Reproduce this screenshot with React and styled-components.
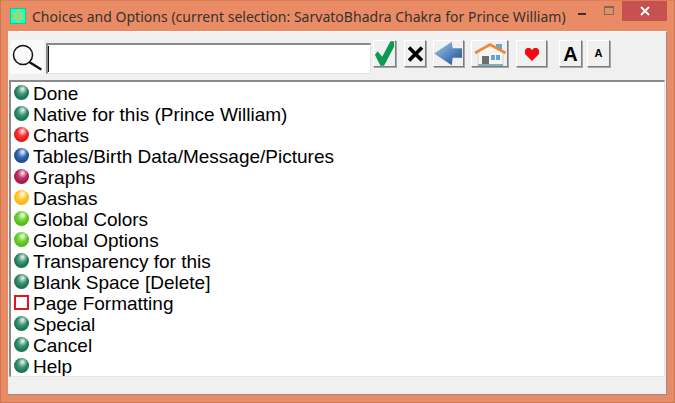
import React from 'react'
import styled, { createGlobalStyle } from 'styled-components'

const Global = createGlobalStyle`
  html, body { margin: 0; padding: 0; background: #e98c65; }
  #root { width: 675px; height: 403px; overflow: hidden; }
`

const Window = styled.div`
  width: 675px;
  height: 403px;
  box-sizing: border-box;
  display: flex;
  flex-direction: column;
  background: #e98c65;
  border: 1px solid #c97850;
  border-top-color: #d98058;
  padding: 0 7px 7px 7px;
  font-family: 'Liberation Sans', Arial, sans-serif;
`

const TitleBar = styled.div`
  height: 30px;
  flex: none;
  display: flex;
  align-items: center;
  position: relative;
`

const AppIcon = styled.svg`
  width: 16px;
  height: 16px;
  margin-left: 2px;
  flex: none;
`

const TitleText = styled.div`
  margin-left: 6px;
  margin-top: 1px;
  font-family: 'Noto Sans', 'Open Sans', sans-serif;
  font-size: 14px;
  letter-spacing: 0.02px;
  color: #38312c;
  white-space: nowrap;
`

const Controls = styled.div`
  position: absolute;
  top: 0;
  right: 0;
  display: flex;
  align-items: flex-start;
`

const ControlButton = styled.div`
  height: 20px;
  display: flex;
  align-items: center;
  justify-content: center;
  width: ${p => p.$width}px;
  background: ${p => p.$bg || 'transparent'};
`

const MinDash = styled.div`
  width: 8px;
  height: 2px;
  margin-top: 5px;
  background: #38312c;
`

const MaxBox = styled.div`
  width: 8px;
  height: 6px;
  border: 1px solid #7a6a5e;
  border-top-width: 2px;
  margin-bottom: 2px;
`

const Client = styled.div`
  flex: 1;
  min-height: 0;
  display: flex;
  flex-direction: column;
  background: #f0f0f0;
  border-top: 1px solid #fff;
  border-right: 1px solid #8f8f8f;
  border-bottom: 1px solid #8f8f8f;
`

const Toolbar = styled.div`
  height: 48px;
  flex: none;
  box-sizing: border-box;
  display: flex;
  align-items: flex-start;
  padding-top: 8px;
  padding-left: 2px;
  background: #f0f0f0;
`

const SearchGlyph = styled.div`
  width: 34px;
  height: 34px;
  flex: none;
  background: #fafafa;
  display: flex;
  align-items: center;
  justify-content: center;
`

const SearchInput = styled.div`
  width: 325px;
  height: 31px;
  margin: 3px 2px 0 2px;
  flex: none;
  box-sizing: border-box;
  background: #fff;
  border: 2px solid #8a8a8a;
  border-right: 1px solid #e2e2e2;
  border-bottom: 1px solid #e2e2e2;
  position: relative;
  &::after {
    content: '';
    position: absolute;
    left: 0;
    top: 1px;
    bottom: 1px;
    width: 1px;
    background: #111;
  }
`

const ToolButton = styled.div`
  width: ${p => p.$width}px;
  height: 27px;
  margin-left: ${p => p.$gap || 0}px;
  flex: none;
  box-sizing: border-box;
  background: #f0f0f0;
  border: 1px solid;
  border-color: #fff #7d7d7d #7d7d7d #fff;
  box-shadow: 1px 1px 0 #a8a8a8;
  display: flex;
  align-items: center;
  justify-content: center;
  position: relative;
`

const FontLetter = styled.span`
  font-family: 'Liberation Sans', Arial, sans-serif;
  font-weight: bold;
  color: #000;
  font-size: ${p => p.$size}px;
  line-height: 1;
`

const List = styled.div`
  height: 297px;
  flex: none;
  box-sizing: border-box;
  margin-left: 1px;
  margin-right: 1px;
  padding-top: 1px;
  background: #fff;
  border-top: 2px solid #8a8a8a;
  border-left: 2px solid #8a8a8a;
  border-right: 1px solid #e4e4e4;
  border-bottom: 1px solid #e4e4e4;
  overflow: hidden;
`

const Row = styled.div`
  height: 21px;
  display: flex;
  align-items: center;
  padding-left: 3px;
`

const Label = styled.span`
  margin-left: 4px;
  font-size: 19px;
  line-height: 21px;
  color: #000;
  white-space: nowrap;
`

const BallShape = styled.div`
  width: 15px;
  height: 15px;
  flex: none;
  border-radius: 50%;
  margin-top: -2px;
  background:
    radial-gradient(circle at 58% 26%, rgba(255, 255, 255, 0.95) 0, rgba(255, 255, 255, 0.45) 16%, rgba(255, 255, 255, 0) 36%),
    radial-gradient(circle at 50% 42%, ${p => p.$light} 0, ${p => p.$base} 58%, ${p => p.$dark} 100%);
`

const EmptyBox = styled.div`
  width: 15px;
  height: 15px;
  flex: none;
  box-sizing: border-box;
  margin-top: -2px;
  border: 2px solid #e8141c;
  background: #fff;
`

const StatusBar = styled.div`
  flex: 1;
  background: #f0f0f0;
`

const palette = {
  green: ['#5fb08c', '#1d7a58', '#145f44'],
  red: ['#ff5a5a', '#f01818', '#c01010'],
  blue: ['#5c8ccc', '#1c5098', '#143f7e'],
  plum: ['#d8527f', '#aa1a52', '#861442'],
  yellow: ['#ffdc60', '#fcbc14', '#eaa406'],
  lime: ['#98e458', '#54c018', '#42a40e'],
}

const items = [
  ['Done', 'green'],
  ['Native for this (Prince William)', 'green'],
  ['Charts', 'red'],
  ['Tables/Birth Data/Message/Pictures', 'blue'],
  ['Graphs', 'plum'],
  ['Dashas', 'yellow'],
  ['Global Colors', 'lime'],
  ['Global Options', 'lime'],
  ['Transparency for this', 'green'],
  ['Blank Space [Delete]', 'green'],
  ['Page Formatting', null],
  ['Special', 'green'],
  ['Cancel', 'green'],
  ['Help', 'green'],
]

const Ball = ({ color }) => {
  const [light, base, dark] = palette[color]
  return <BallShape $light={light} $base={base} $dark={dark} />
}

const StarIcon = () => (
  <AppIcon viewBox="0 0 16 16">
    <rect width="16" height="16" fill="#0ff" />
    <rect x="0" y="0" width="16" height="1" fill="#2bd13c" />
    <rect x="0" y="15" width="16" height="1" fill="#2bd13c" />
    <rect x="0" y="0" width="1" height="16" fill="#2bd13c" />
    <rect x="15" y="0" width="1" height="16" fill="#2bd13c" />
    <path d="M8 2 L13 11 H3 Z M8 14 L3 5 H13 Z" fill="none" stroke="#d8cf30" strokeWidth="1.2" />
    <circle cx="8" cy="8" r="1.6" fill="#d8cf30" />
  </AppIcon>
)

const Magnifier = () => (
  <svg width="32" height="32" viewBox="0 0 32 32">
    <circle cx="12" cy="14" r="9.5" fill="none" stroke="#111" strokeWidth="1.5" />
    <path d="M19 21.5 L29.5 28" stroke="#111" strokeWidth="2.4" strokeLinecap="round" />
  </svg>
)

const Check = () => (
  <svg width="23" height="27" viewBox="0 0 23 27">
    <path d="M1 15 L4 11 L9 17 L18 0 L22 0 L22 6 L11 27 L7 27 Z" fill="#0c9a50" />
  </svg>
)

const Cross = () => (
  <svg width="17" height="16" viewBox="0 0 17 16">
    <path d="M2 1.5 L15 14.5 M15 1.5 L2 14.5" stroke="#000" strokeWidth="3.6" />
  </svg>
)

const BackArrow = () => (
  <svg width="31" height="27" viewBox="0 0 31 27">
    <defs>
      <linearGradient id="arrowFill" x1="0" y1="0" x2="1" y2="1">
        <stop offset="0" stopColor="#b4cce8" />
        <stop offset="0.5" stopColor="#5c8cc4" />
        <stop offset="1" stopColor="#1c4a8a" />
      </linearGradient>
    </defs>
    <path d="M0 13.5 L19 1 L20 8 L30 8 L30 18 L20 18 L19 26 Z" fill="url(#arrowFill)" />
  </svg>
)

const House = () => (
  <svg width="34" height="26" viewBox="0 0 34 26">
    <rect x="23" y="3" width="6" height="8" fill="#6aa8c8" />
    <path d="M5 11 L17 4 L30 11 V24 H5 Z" fill="#f4f6f6" stroke="#b8c4c8" strokeWidth="0.6" />
    <path d="M2 12 L17 3.5 L32.5 12" fill="none" stroke="#ee8838" strokeWidth="2.6" />
    <rect x="9" y="15" width="7" height="8" fill="#6e6e6e" />
    <rect x="18" y="14" width="4" height="5" fill="#68a4c8" />
    <rect x="23" y="14" width="4" height="5" fill="#68a4c8" />
    <path d="M5 24 H30" stroke="#5e96a8" strokeWidth="1.4" />
  </svg>
)

const Heart = () => (
  <svg width="16" height="14" viewBox="0 0 16 14">
    <path d="M8 14 L1 7 V3 L3 1 H6 L8 3 L10 1 H13 L15 3 V7 Z" fill="#f40a12" />
  </svg>
)

export default function App() {
  return (
    <>
      <Global />
      <Window>
        <TitleBar>
          <StarIcon />
          <TitleText>Choices and Options (current selection: SarvatoBhadra Chakra for Prince William)</TitleText>
          <Controls>
            <ControlButton $width={26}><MinDash /></ControlButton>
            <ControlButton $width={27}><MaxBox /></ControlButton>
            <ControlButton $width={45} $bg="#c75050">
              <svg width="10" height="10" viewBox="0 0 10 10">
                <path d="M1 1 L9 9 M9 1 L1 9" stroke="#fff" strokeWidth="1.8" />
              </svg>
            </ControlButton>
          </Controls>
        </TitleBar>
        <Client>
          <Toolbar>
            <SearchGlyph><Magnifier /></SearchGlyph>
            <SearchInput />
            <ToolButton $width={23}><Check /></ToolButton>
            <ToolButton $width={22} $gap={8}><Cross /></ToolButton>
            <ToolButton $width={31} $gap={7}><BackArrow /></ToolButton>
            <ToolButton $width={37} $gap={7}><House /></ToolButton>
            <ToolButton $width={31} $gap={8}><Heart /></ToolButton>
            <ToolButton $width={23} $gap={12}><FontLetter $size={20}>A</FontLetter></ToolButton>
            <ToolButton $width={23} $gap={5}><FontLetter $size={11}>A</FontLetter></ToolButton>
          </Toolbar>
          <List>
            {items.map(([text, color]) => (
              <Row key={text}>
                {color ? <Ball color={color} /> : <EmptyBox />}
                <Label>{text}</Label>
              </Row>
            ))}
          </List>
          <StatusBar />
        </Client>
      </Window>
    </>
  )
}
